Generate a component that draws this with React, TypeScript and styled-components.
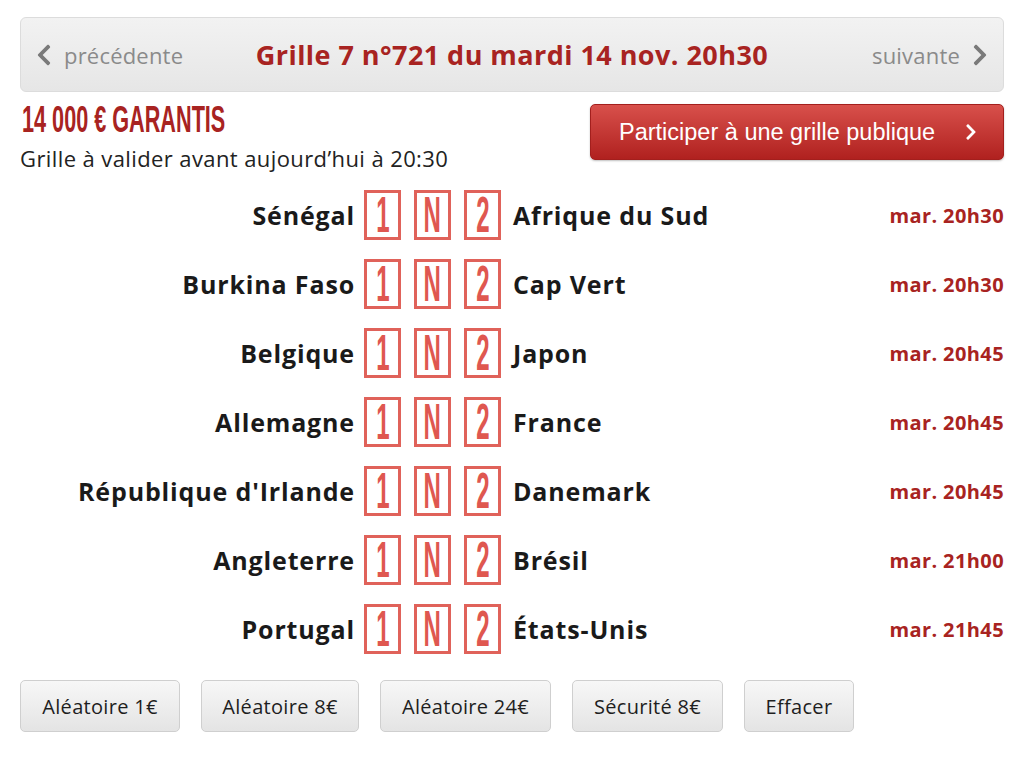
import { createGlobalStyle } from 'styled-components';
import styled from 'styled-components';
import { FaChevronLeft, FaChevronRight } from 'react-icons/fa';

const GlobalStyle = createGlobalStyle`
  body {
    margin: 0;
    background: #fff;
    font-family: "Open Sans", Lato, sans-serif;
  }
`;

const Page = styled.div`
  width: 984px;
  padding: 17px 20px 0 20px;
`;

const NavBar = styled.div`
  height: 75px;
  display: grid;
  grid-template-columns: 1fr auto 1fr;
  align-items: center;
  padding: 0 11px;
  border: 1px solid #dcdcdc;
  border-radius: 6px;
  background: linear-gradient(#f2f2f2, #e6e6e6);
  box-sizing: border-box;
`;

const NavLink = styled.span<{ $next?: boolean }>`
  display: flex;
  align-items: center;
  gap: 8px;
  justify-self: ${({ $next }) => ($next ? 'end' : 'start')};
  color: #8a8a8a;
  font-size: 22px;
  letter-spacing: 0.2px;
  svg {
    color: #7a7a7a;
    font-size: 24px;
  }
`;

const Title = styled.h1`
  margin: 0;
  color: #a82321;
  font-size: 27px;
  font-weight: 700;
  letter-spacing: 0.45px;
`;

const InfoRow = styled.div`
  display: flex;
  justify-content: space-between;
  align-items: flex-start;
  margin-top: 12px;
  height: 86px;
`;

const Prize = styled.div`
  height: 30px;
  color: #a82321;
  font-family: "Liberation Sans", sans-serif;
  font-weight: 700;
  font-size: 37px;
  line-height: 32px;
  padding-left: 2px;
  span {
    display: inline-block;
    transform: scaleX(0.585);
    transform-origin: left center;
    white-space: nowrap;
  }
`;

const Deadline = styled.div`
  margin-top: 9px;
  color: #222;
  font-size: 22px;
  letter-spacing: 0.4px;
`;

const PublicButton = styled.button`
  width: 414px;
  height: 56px;
  display: flex;
  align-items: center;
  justify-content: space-between;
  padding: 0 23px 0 28px;
  border: 1px solid #a31f1d;
  border-radius: 5px;
  background: linear-gradient(#d8504b, #b0211f);
  color: #fff;
  font-family: "Liberation Sans", sans-serif;
  font-size: 23.5px;
  box-shadow: 0 1px 2px rgba(0, 0, 0, 0.25);
  svg {
    font-size: 18px;
  }
`;

const Matches = styled.div`
  display: flex;
  flex-direction: column;
  gap: 19px;
`;

const MatchRow = styled.div`
  display: grid;
  grid-template-columns: 344px 137px 1fr auto;
  align-items: center;
  height: 50px;
`;

const Team = styled.div<{ $home?: boolean }>`
  color: #1a1a1a;
  font-size: 25px;
  font-weight: 700;
  letter-spacing: 0.85px;
  text-align: ${({ $home }) => ($home ? 'right' : 'left')};
  padding: ${({ $home }) => ($home ? '0 9px 0 0' : '0 0 0 12px')};
  white-space: nowrap;
`;

const Picks = styled.div`
  display: flex;
  gap: 13px;
`;

const PickBox = styled.div`
  width: 37px;
  height: 50px;
  box-sizing: border-box;
  border: 3px solid #e0625a;
  display: flex;
  align-items: center;
  justify-content: center;
  color: #df5750;
  font-family: "Liberation Sans", sans-serif;
  font-weight: 700;
  font-size: 50px;
  line-height: 1;
  span {
    display: inline-block;
    transform: scaleX(0.48);
  }
`;

const KickOff = styled.div`
  color: #a82321;
  font-size: 20px;
  font-weight: 700;
  letter-spacing: 0.4px;
`;

const Actions = styled.div`
  display: flex;
  gap: 21px;
  margin-top: 26px;
`;

const ActionButton = styled.button<{ $width: number }>`
  width: ${({ $width }) => $width}px;
  height: 52px;
  border: 1px solid #cfcfcf;
  border-radius: 5px;
  background: linear-gradient(#f7f7f7, #e4e4e4);
  color: #1e1e1e;
  font-family: "Open Sans", sans-serif;
  font-size: 20px;
  letter-spacing: 0.3px;
  padding: 0;
`;

const matches = [
  ['Sénégal', 'Afrique du Sud', 'mar. 20h30'],
  ['Burkina Faso', 'Cap Vert', 'mar. 20h30'],
  ['Belgique', 'Japon', 'mar. 20h45'],
  ['Allemagne', 'France', 'mar. 20h45'],
  ["République d'Irlande", 'Danemark', 'mar. 20h45'],
  ['Angleterre', 'Brésil', 'mar. 21h00'],
  ['Portugal', 'États-Unis', 'mar. 21h45'],
];

const actions = [
  { label: 'Aléatoire 1€', width: 160 },
  { label: 'Aléatoire 8€', width: 158 },
  { label: 'Aléatoire 24€', width: 171 },
  { label: 'Sécurité 8€', width: 151 },
  { label: 'Effacer', width: 110 },
];

export default function App() {
  return (
    <>
      <GlobalStyle />
      <Page>
        <NavBar>
          <NavLink>
            <FaChevronLeft />
            précédente
          </NavLink>
          <Title>Grille 7 n°721 du mardi 14 nov. 20h30</Title>
          <NavLink $next>
            suivante
            <FaChevronRight />
          </NavLink>
        </NavBar>
        <InfoRow>
          <div>
            <Prize>
              <span>14 000 € GARANTIS</span>
            </Prize>
            <Deadline>Grille à valider avant aujourd’hui à 20:30</Deadline>
          </div>
          <PublicButton>
            Participer à une grille publique
            <FaChevronRight />
          </PublicButton>
        </InfoRow>
        <Matches>
          {matches.map(([home, away, time]) => (
            <MatchRow key={home}>
              <Team $home>{home}</Team>
              <Picks>
                {['1', 'N', '2'].map((p) => (
                  <PickBox key={p}>
                    <span>{p}</span>
                  </PickBox>
                ))}
              </Picks>
              <Team>{away}</Team>
              <KickOff>{time}</KickOff>
            </MatchRow>
          ))}
        </Matches>
        <Actions>
          {actions.map((a) => (
            <ActionButton key={a.label} $width={a.width}>
              {a.label}
            </ActionButton>
          ))}
        </Actions>
      </Page>
    </>
  );
}
